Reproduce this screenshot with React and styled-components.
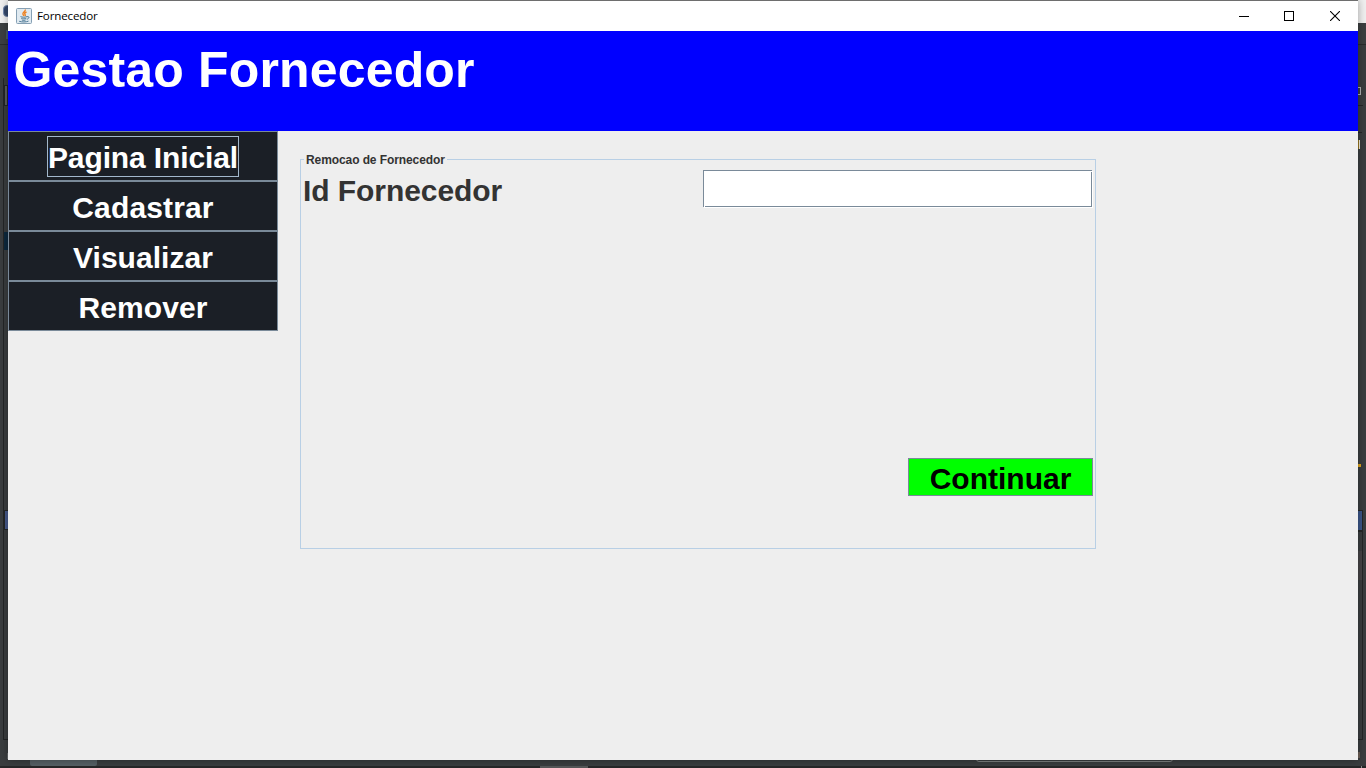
import React from "react";
import styled, { createGlobalStyle } from "styled-components";

const GlobalStyle = createGlobalStyle`
  * { box-sizing: border-box; }
  body { margin: 0; overflow: hidden; font-family: "Liberation Sans", Arial, sans-serif; }
`;

const Desktop = styled.div`
  position: relative;
  width: 1366px;
  height: 768px;
  padding: 0 8px 8px;
  overflow: hidden;
  background: linear-gradient(#f0f0f0 0 23px, #3c3f41 23px 44px, #2a2c2d 44px 45px, #3a3d3f 45px 766px, #262728 766px);
`;

/* Pieces of the editor that show around the window's edges. */
const Sliver = styled.span`
  position: absolute;
  left: ${(p) => p.$x}px;
  top: ${(p) => p.$y}px;
  width: ${(p) => p.$w}px;
  height: ${(p) => p.$h}px;
  background: ${(p) => p.$fill || "transparent"};
  border: ${(p) => (p.$line ? `1px solid ${p.$line}` : "0")};
  border-radius: ${(p) => p.$r || 0}px;
`;

const Window = styled.main`
  position: relative;
  display: flex;
  flex-direction: column;
  width: 1350px;
  height: 760px;
  background: #eeeeee;
  border-top: 1px solid #6e6e6e;
  box-shadow: 0 0 8px rgba(0, 0, 0, 0.35);
`;

const TitleBar = styled.header`
  display: flex;
  align-items: center;
  height: 30px;
  padding-left: 8px;
  background: #fff;
`;

const WindowTitle = styled.span`
  flex: 1;
  margin-left: 5px;
  font: 11.6px/16px "Open Sans", "Noto Sans", sans-serif;
  color: #000;
  letter-spacing: -0.15px;
`;

const WindowButton = styled.button`
  display: flex;
  align-items: center;
  justify-content: center;
  width: ${(p) => p.$w || 45}px;
  height: 30px;
  padding: 0;
  border: 0;
  background: transparent;
`;

const Banner = styled.h1`
  height: 100px;
  margin: 0;
  padding: 10px 0 0 5.5px;
  background: #0000ff;
  color: #fff;
  font-size: 50px;
  font-weight: 700;
  line-height: 58px;
  letter-spacing: 0.16px;
`;

const Content = styled.div`
  display: flex;
  flex: 1;
  align-items: flex-start;
`;

const Menu = styled.nav`
  display: flex;
  flex-direction: column;
  width: 270px;
`;

const MenuButton = styled.button`
  display: flex;
  align-items: center;
  justify-content: center;
  height: 50px;
  padding: 0;
  border: 1px solid #7a8a99;
  background: #1b1f26;
  color: #fff;
  font: 700 30px/35px "Liberation Sans", Arial, sans-serif;
`;

const MenuLabel = styled.span`
  padding: 3px 0 1px;
  border: 1px solid ${(p) => (p.$focused ? "#a3b8cc" : "transparent")};
  letter-spacing: ${(p) => p.$tracking}px;
`;

const Panel = styled.fieldset`
  display: flex;
  flex-direction: column;
  justify-content: space-between;
  width: 796px;
  height: 397px;
  margin: 21px 0 0 22px;
  padding: 3px 2px 52px;
  border: 1px solid #b8cfe5;
`;

const PanelTitle = styled.legend`
  height: 15px;
  margin-left: 1px;
  padding: 0 2px;
  color: #333;
  font-size: 12px;
  font-weight: 700;
  line-height: 17px;
  letter-spacing: -0.09px;
`;

const FieldRow = styled.div`
  display: flex;
  justify-content: space-between;
  height: 38px;
`;

const FieldLabel = styled.label`
  color: #333;
  font-size: 30px;
  font-weight: 700;
  line-height: 42px;
  letter-spacing: -0.07px;
`;

/* The etched frame leaves its top-right and bottom-left corners open. */
const Field = styled.input`
  width: 389px;
  height: 37px;
  margin-right: 1px;
  padding: 0 4px;
  border: 0;
  border-radius: 0;
  outline: 0;
  background:
    linear-gradient(#7a8a99, #7a8a99) 0 0 / 100% 1px no-repeat,
    linear-gradient(#7a8a99, #7a8a99) 0 0 / 1px 100% no-repeat,
    linear-gradient(#fff, #fff) 100% 1px / 1px 1px no-repeat,
    linear-gradient(#fff, #fff) 1px 100% / 1px 1px no-repeat,
    linear-gradient(#7a8a99, #7a8a99) 100% 0 / 1px 100% no-repeat,
    linear-gradient(#7a8a99, #7a8a99) 0 100% / 100% 1px no-repeat,
    #fff;
  box-shadow: 1px 1px 0 #fff;
  font: 30px "Liberation Sans", Arial, sans-serif;
`;

const SubmitButton = styled.button`
  align-self: flex-end;
  width: 185px;
  height: 38px;
  padding: 3px 0 0;
  border: 1px solid #7a8a99;
  background: #00ff00;
  color: #000;
  font: 700 30px/34px "Liberation Sans", Arial, sans-serif;
`;

const JavaIcon = () => (
  <svg width="16" height="16" viewBox="0 0 16 16" fill="none">
    <rect x=".5" y=".5" width="15" height="15" rx="1" fill="#e0eaf1" stroke="#86a0b4" />
    <path d="M9.300 1.500c.5 2-3.400 2.600-2.300 5l.9 1.400M10.500 4c-2 .9-2.300 1.600-1.300 2.700.4.600.1 1-.3 1.400" stroke="#ee8222" strokeWidth="1.400" />
    <path d="M4.500 8.600c1.500.8 4.700.8 6.500 0M5.300 10.400c1.500.6 3.600.6 5 0M5.800 12c1.200.5 2.800.5 3.800 0M11 8.700c3-.7 2.200 2-.2 2.600M3.200 13.300c2.500.9 7 .9 9.300-.2" stroke="#4d7996" />
  </svg>
);

const slivers = [
  { x: 3, y: 5, w: 12, h: 12, fill: "#36496c", line: "#7186aa", r: 4 },
  { x: 6, y: 30, w: 3, h: 9, fill: "#465b69" },
  { x: 3, y: 78, w: 1, h: 661, fill: "#232526" },
  { x: 4, y: 85, w: 4, h: 21, fill: "#5b5e60", line: "#242627" },
  { x: 4, y: 232, w: 4, h: 18, fill: "#0d293e" },
  { x: 4, y: 510, w: 5, h: 20, fill: "#465a8c", line: "#242627" },
  { x: 3, y: 739, w: 5, h: 1, fill: "#232526" },
  { x: 7, y: 753, w: 1, h: 6, fill: "#626567" },
  { x: 1355, y: 87, w: 6, h: 8, line: "#b0b2b3" },
  { x: 1358, y: 105, w: 5, h: 1, fill: "#242627" },
  { x: 1358, y: 132, w: 4, h: 1, fill: "#242627" },
  { x: 1358, y: 140, w: 1, h: 9, fill: "#9a771f" },
  { x: 1359, y: 140, w: 1, h: 9, fill: "#f4f0e4" },
  { x: 1358, y: 464, w: 3, h: 3, fill: "#dfa51c" },
  { x: 1355, y: 510, w: 8, h: 21, fill: "#3b5689", line: "#242627" },
  { x: 1355, y: 531, w: 8, h: 209, line: "#242627" },
  { x: 1355, y: 551, w: 7, h: 29, fill: "#454446" },
  { x: 1358, y: 752, w: 2, h: 6, fill: "#6c5f56" },
  { x: 30, y: 750, w: 67, h: 16, fill: "#566065", r: 2 },
  { x: 540, y: 766, w: 48, h: 2, fill: "#555758" },
  { x: 976, y: 750, w: 197, h: 12, line: "#7d8081", r: 3 },
  { x: 1361, y: 766, w: 1, h: 2, fill: "#8b8d8e" },
];

const menuItems = [
  { label: "Pagina Inicial", tracking: -0.12 },
  { label: "Cadastrar", tracking: 0.15 },
  { label: "Visualizar", tracking: 0.05 },
  { label: "Remover", tracking: 0.1 },
];

export default function App() {
  return (
    <Desktop>
      <GlobalStyle />
      {slivers.map((s, i) => (
        <Sliver key={i} $x={s.x} $y={s.y} $w={s.w} $h={s.h} $fill={s.fill} $line={s.line} $r={s.r} />
      ))}
      <Window>
        <TitleBar>
          <JavaIcon />
          <WindowTitle>Fornecedor</WindowTitle>
          <WindowButton aria-label="Minimizar">
            <svg width="10" height="10" shapeRendering="crispEdges"><path d="M0 5.500h10" stroke="#000" /></svg>
          </WindowButton>
          <WindowButton aria-label="Maximizar">
            <svg width="10" height="10" shapeRendering="crispEdges"><path d="M.5.5h9v9h-9z" fill="none" stroke="#000" /></svg>
          </WindowButton>
          <WindowButton aria-label="Fechar" $w={47}>
            <svg width="10" height="10"><path d="M0 0l10 10M10 0L0 10" stroke="#000" strokeWidth="1.100" /></svg>
          </WindowButton>
        </TitleBar>
        <Banner>Gestao Fornecedor</Banner>
        <Content>
          <Menu>
            {menuItems.map((item, i) => (
              <MenuButton key={item.label}>
                <MenuLabel $focused={i === 0} $tracking={item.tracking}>{item.label}</MenuLabel>
              </MenuButton>
            ))}
          </Menu>
          <Panel>
            <PanelTitle>Remocao de Fornecedor</PanelTitle>
            <FieldRow>
              <FieldLabel htmlFor="id-fornecedor">Id Fornecedor</FieldLabel>
              <Field id="id-fornecedor" />
            </FieldRow>
            <SubmitButton>Continuar</SubmitButton>
          </Panel>
        </Content>
      </Window>
    </Desktop>
  );
}
